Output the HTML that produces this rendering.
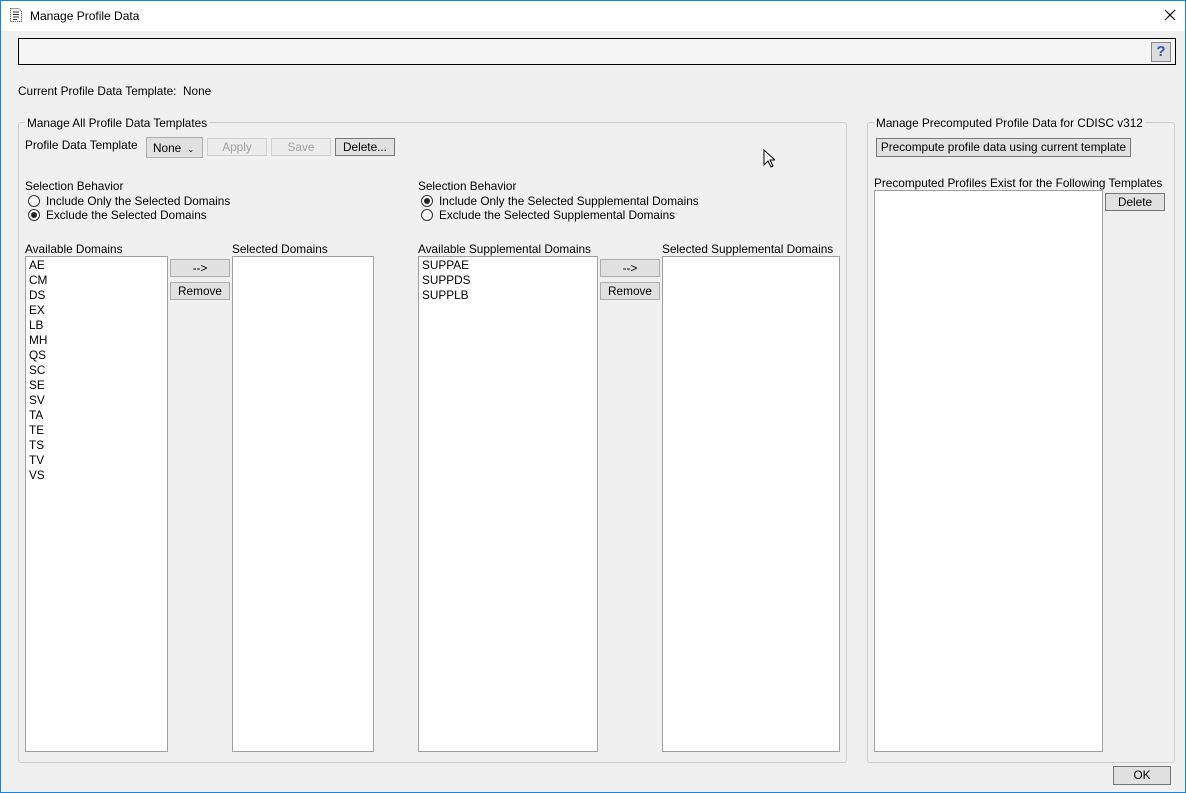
<!DOCTYPE html>
<html><head><style>
*{box-sizing:border-box;margin:0;padding:0}
body{width:1186px;height:793px;background:#f0f0f0;font-family:"Liberation Sans",sans-serif;font-size:11.8px;color:#000;position:relative;overflow:hidden}
.a{position:absolute;white-space:nowrap}
.t{margin-top:1px}
.win{position:absolute;left:0;top:0;width:1186px;height:793px;border:1px solid #1883d7;border-top:none}
.title{position:absolute;left:0;top:0;width:1186px;height:31px;background:#fff;border-top:1px solid #1883d7}
.btn{position:absolute;background:#e1e1e1;border:1px solid #adadad;text-align:center;line-height:17px}
.dis{background:#ececec;border-color:#cfcfcf;color:#a0a0a0}
.list{position:absolute;background:#fff;border:1px solid #a0a0a0;padding:1px 3px;line-height:15px}
.grp{position:absolute;border:1px solid #d0d0d0;border-radius:3px}
.leg{position:absolute;background:#f0f0f0;padding:0 2px;top:-7px}
.rad{position:absolute;width:12px;height:12px;border:1px solid #333;border-radius:50%;background:#fff}
.rad.on::after{content:"";position:absolute;left:2px;top:2px;width:6px;height:6px;border-radius:50%;background:#222}
</style></head><body>
<div class="title"></div>
<div class="win"></div>
<svg class="a" style="left:9px;top:7px" width="14" height="16" viewBox="0 0 14 16"><path d="M1.5 1.5h8l3 3v10h-11z" fill="#fff" stroke="#333" stroke-dasharray="1 1"/><path d="M4 5h6M4 7.5h6M4 10h6M4 12.5h4" stroke="#333"/></svg>
<div class="a" style="left:30px;top:9px;font-size:12px">Manage Profile Data</div>
<svg class="a" style="left:1164px;top:9px" width="12" height="12"><path d="M1 1L11 11M11 1L1 11" stroke="#000" stroke-width="1.2"/></svg>
<div class="a" style="left:18px;top:38px;width:1158px;height:27px;border:1px solid #000;background:#f5f5f5"></div>
<div class="a" style="left:1151px;top:42px;width:20px;height:20px;border:1px solid #888;background:#dcdcdc;color:#2a5aa8;font-weight:bold;font-size:15px;text-align:center;line-height:18px">?</div>
<div class="a t" style="left:18px;top:83px">Current Profile Data Template:&nbsp; None</div>

<div class="grp" style="left:18px;top:122px;width:829px;height:641px"><div class="leg" style="left:6px">Manage All Profile Data Templates</div></div>
<div class="a t" style="left:25px;top:137px">Profile Data Template</div>
<div class="btn" style="left:146px;top:137px;width:57px;height:21px;line-height:20px;text-align:left;padding-left:6px">None <span style="font-size:8px;margin-left:3px">&#8964;</span></div>
<div class="btn dis" style="left:207px;top:138px;width:60px;height:18px">Apply</div>
<div class="btn dis" style="left:271px;top:138px;width:60px;height:18px">Save</div>
<div class="btn" style="left:335px;top:138px;width:60px;height:18px;border-color:#777">Delete...</div>

<div class="a t" style="left:25px;top:178px">Selection Behavior</div>
<div class="rad" style="left:28px;top:195px"></div><div class="a t" style="left:46px;top:193px">Include Only the Selected Domains</div>
<div class="rad on" style="left:28px;top:209px"></div><div class="a t" style="left:46px;top:207px">Exclude the Selected Domains</div>
<div class="a t" style="left:418px;top:178px">Selection Behavior</div>
<div class="rad on" style="left:421px;top:195px"></div><div class="a t" style="left:439px;top:193px">Include Only the Selected Supplemental Domains</div>
<div class="rad" style="left:421px;top:209px"></div><div class="a t" style="left:439px;top:207px">Exclude the Selected Supplemental Domains</div>

<div class="a t" style="left:25px;top:241px">Available Domains</div>
<div class="a t" style="left:232px;top:241px">Selected Domains</div>
<div class="a t" style="left:418px;top:241px">Available Supplemental Domains</div>
<div class="a t" style="left:662px;top:241px">Selected Supplemental Domains</div>
<div class="list" style="left:25px;top:256px;width:143px;height:496px">AE<br>CM<br>DS<br>EX<br>LB<br>MH<br>QS<br>SC<br>SE<br>SV<br>TA<br>TE<br>TS<br>TV<br>VS</div>
<div class="list" style="left:232px;top:256px;width:142px;height:496px"></div>
<div class="list" style="left:418px;top:256px;width:180px;height:496px">SUPPAE<br>SUPPDS<br>SUPPLB</div>
<div class="list" style="left:662px;top:256px;width:178px;height:496px"></div>
<div class="btn" style="left:170px;top:259px;width:60px;height:18px">--&gt;</div>
<div class="btn" style="left:170px;top:282px;width:60px;height:18px">Remove</div>
<div class="btn" style="left:600px;top:259px;width:60px;height:18px">--&gt;</div>
<div class="btn" style="left:600px;top:282px;width:60px;height:18px">Remove</div>

<div class="grp" style="left:867px;top:122px;width:308px;height:641px"><div class="leg" style="left:6px">Manage Precomputed Profile Data for CDISC v312</div></div>
<div class="btn" style="left:876px;top:138px;width:255px;height:19px;border-color:#777">Precompute profile data using current template</div>
<div class="a t" style="left:874px;top:175px">Precomputed Profiles Exist for the Following Templates</div>
<div class="list" style="left:874px;top:190px;width:229px;height:562px"></div>
<div class="btn" style="left:1105px;top:193px;width:60px;height:18px;border-color:#777">Delete</div>
<div class="btn" style="left:1113px;top:766px;width:58px;height:19px;border-color:#777">OK</div>
<svg class="a" style="left:763px;top:149px" width="12" height="19"><path d="M1 1v15l4-4 3 6 2-1-3-6h5z" fill="#fff" stroke="#000"/></svg>
</body></html>
